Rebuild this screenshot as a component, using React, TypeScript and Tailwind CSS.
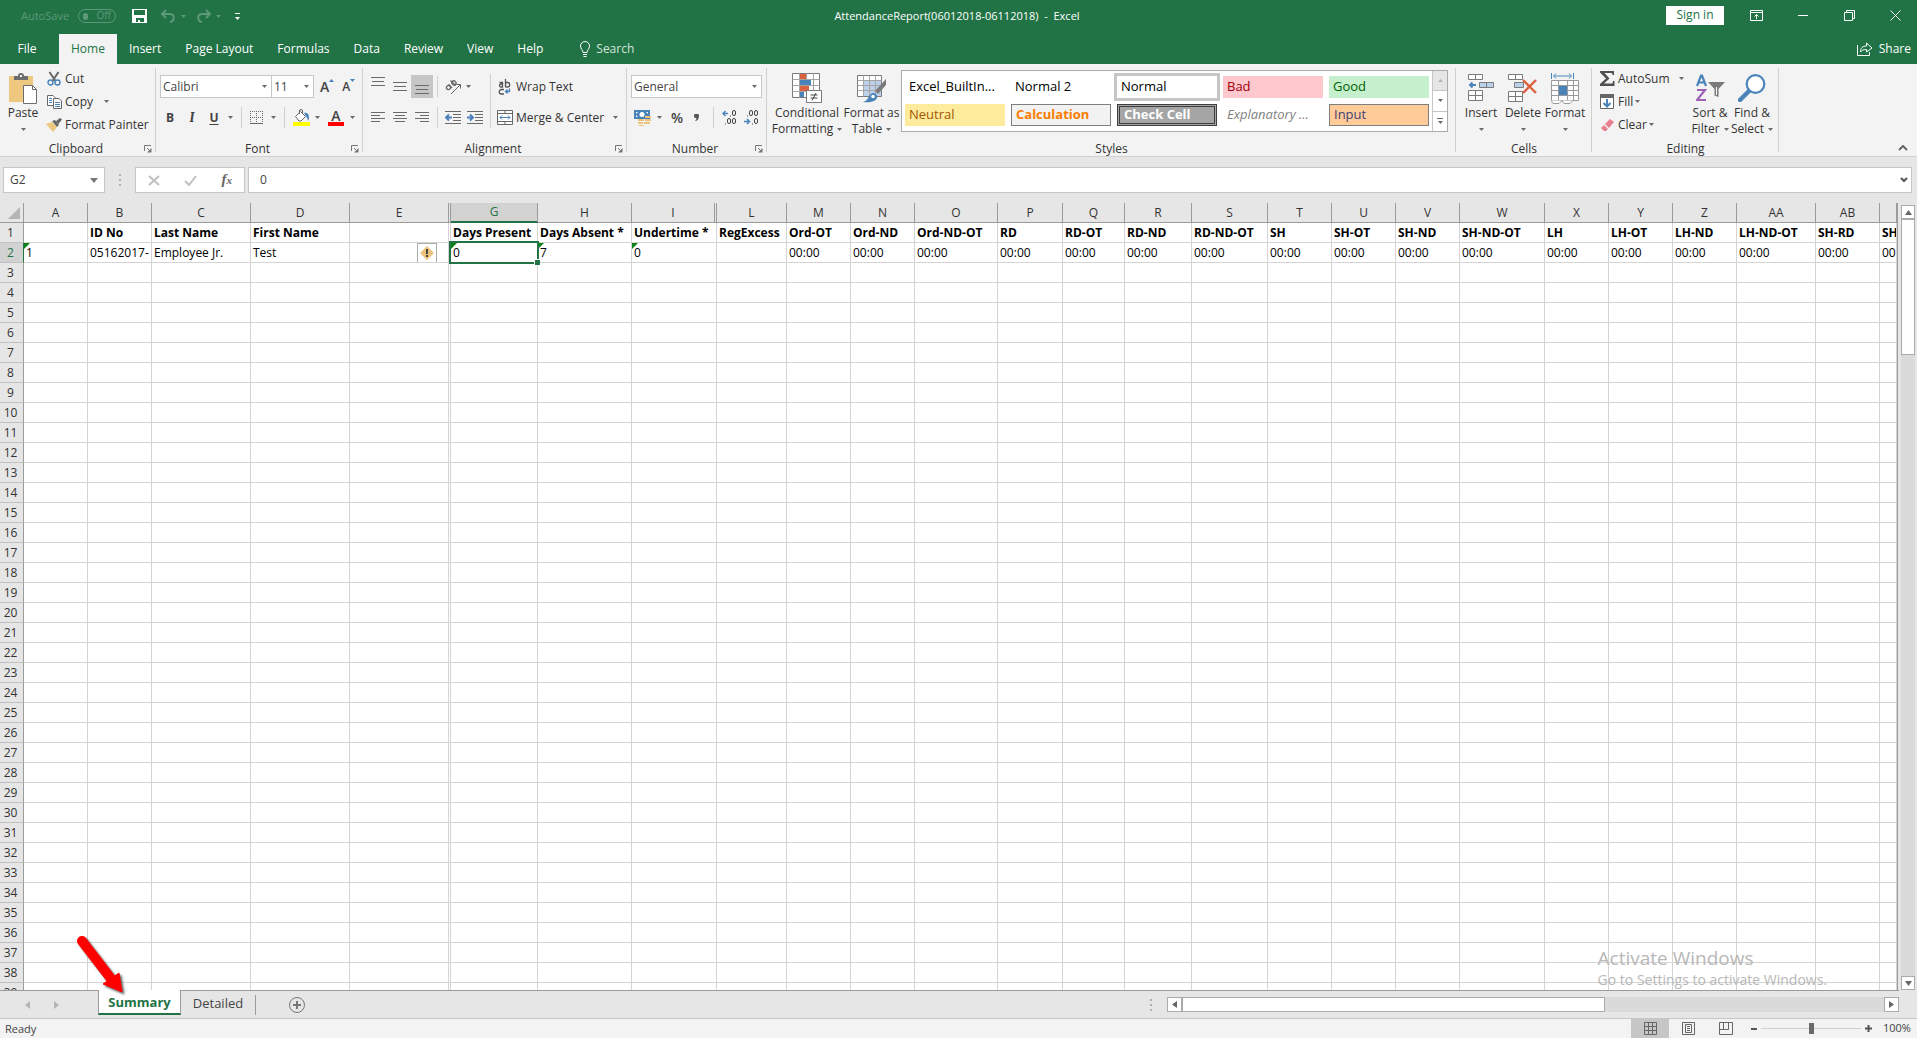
import { useState } from "react";
import clsx from "clsx";

interface Column {
  letter: string;
  width: string;
  title?: string;
  value?: string;
  flagged?: boolean;
}

interface CellStyle {
  label: string;
  className: string;
}

const columns: Column[] = [
  { letter: "A", width: "w-[64px]", value: "1", flagged: true },
  { letter: "B", width: "w-[64px]", title: "ID No", value: "05162017-" },
  { letter: "C", width: "w-[99px]", title: "Last Name", value: "Employee Jr." },
  { letter: "D", width: "w-[99px]", title: "First Name", value: "Test" },
  { letter: "E", width: "w-[99px]" },
  { letter: "", width: "w-[2px]" },
  { letter: "G", width: "w-[87px]", title: "Days Present", value: "0", flagged: true },
  { letter: "H", width: "w-[94px]", title: "Days Absent *", value: "7", flagged: true },
  { letter: "I", width: "w-[83px]", title: "Undertime *", value: "0", flagged: true },
  { letter: "", width: "w-[2px]" },
  { letter: "L", width: "w-[70px]", title: "RegExcess" },
  { letter: "M", width: "w-[64px]", title: "Ord-OT", value: "00:00" },
  { letter: "N", width: "w-[64px]", title: "Ord-ND", value: "00:00" },
  { letter: "O", width: "w-[83px]", title: "Ord-ND-OT", value: "00:00" },
  { letter: "P", width: "w-[65px]", title: "RD", value: "00:00" },
  { letter: "Q", width: "w-[62px]", title: "RD-OT", value: "00:00" },
  { letter: "R", width: "w-[67px]", title: "RD-ND", value: "00:00" },
  { letter: "S", width: "w-[76px]", title: "RD-ND-OT", value: "00:00" },
  { letter: "T", width: "w-[64px]", title: "SH", value: "00:00" },
  { letter: "U", width: "w-[64px]", title: "SH-OT", value: "00:00" },
  { letter: "V", width: "w-[64px]", title: "SH-ND", value: "00:00" },
  { letter: "W", width: "w-[85px]", title: "SH-ND-OT", value: "00:00" },
  { letter: "X", width: "w-[64px]", title: "LH", value: "00:00" },
  { letter: "Y", width: "w-[64px]", title: "LH-OT", value: "00:00" },
  { letter: "Z", width: "w-[64px]", title: "LH-ND", value: "00:00" },
  { letter: "AA", width: "w-[79px]", title: "LH-ND-OT", value: "00:00" },
  { letter: "AB", width: "w-[64px]", title: "SH-RD", value: "00:00" },
  { letter: "", width: "w-auto", title: "SH-RD-OT", value: "00:00" },
];

const rows = Array.from({ length: 39 }, (_, i) => i + 1);

const menuTabs = ["Home", "Insert", "Page Layout", "Formulas", "Data", "Review", "View", "Help"];

const cellStyles: CellStyle[] = [
  { label: "Excel_BuiltIn...", className: "text-black" },
  { label: "Normal 2", className: "text-black" },
  { label: "Normal", className: "bg-white text-black outline-3 outline-[#c6c6c6]" },
  { label: "Bad", className: "bg-[#ffc7ce] text-[#9c0006]" },
  { label: "Good", className: "bg-[#c6efce] text-[#006100]" },
  { label: "Neutral", className: "bg-[#ffeb9c] text-[#9c5700]" },
  { label: "Calculation", className: "border border-[#7f7f7f] bg-[#f2f2f2] font-bold text-[#fa7d00]" },
  { label: "Check Cell", className: "border-3 border-double border-[#3f3f3f] bg-[#a5a5a5] font-bold text-white" },
  { label: "Explanatory ...", className: "text-[#7f7f7f] italic" },
  { label: "Input", className: "border border-[#7f7f7f] bg-[#ffcc99] text-[#3f3f76]" },
];

function Caret({ className = "text-[#6a6a6a]" }: { className?: string }) {
  return (
    <svg width="5" height="3" viewBox="0 0 5 3" className={clsx("shrink-0", className)}>
      <path d="M0 0h5L2.5 3z" fill="currentColor" />
    </svg>
  );
}

function Launcher() {
  return (
    <button aria-label="More options" className="text-[#777]">
      <svg width="8" height="8" viewBox="0 0 8 8" fill="none" stroke="currentColor">
        <path d="M.5 6V.5H7M3 3l3 3" />
        <path d="M7.5 3v4.5H3z" fill="currentColor" stroke="none" />
      </svg>
    </button>
  );
}

function Divider({ className = "h-[21px]" }: { className?: string }) {
  return <span className={clsx("w-px shrink-0 bg-[#d0d0d0]", className)} />;
}

function RibbonGroup({
  name,
  className,
  launcher = false,
  children,
}: {
  name: string;
  className: string;
  launcher?: boolean;
  children: React.ReactNode;
}) {
  return (
    <section aria-label={name} className={clsx("relative flex flex-col", className)}>
      <div className="flex h-[76px] pt-[3px]">{children}</div>
      <div className="flex h-4 items-center pt-px">
        <span className={clsx("flex-1 text-center text-[#333]", launcher && "pl-2")}>{name}</span>
        {launcher && (
          <span className="pr-1">
            <Launcher />
          </span>
        )}
      </div>
      <span className="absolute top-1 right-0 h-[84px] w-px bg-[#d0d0d0]" />
    </section>
  );
}

function SmallButton({ icon, label, caret }: { icon: React.ReactNode; label: string; caret?: string }) {
  return (
    <button className="flex h-[23px] items-center gap-[3px]">
      <span className="flex w-4 justify-center">{icon}</span>
      <span>{label}</span>
      {caret && <Caret className={clsx("text-[#6a6a6a]", caret)} />}
    </button>
  );
}

function BigButton({
  icon,
  lines,
  className,
}: {
  icon: React.ReactNode;
  lines: string[];
  className: string;
}) {
  return (
    <button className={clsx("flex flex-col items-center", className)}>
      <span className="flex h-[38px] items-center justify-center pt-1">{icon}</span>
      <span className="h-4 leading-4 whitespace-nowrap">{lines[0]}</span>
      <span className="flex h-4 items-center gap-1 leading-4 whitespace-nowrap">
        {lines[1]}
        <Caret />
      </span>
    </button>
  );
}

function Lines({ rows: lines }: { rows: [number, number][] }) {
  return (
    <svg width="14" height="14" viewBox="0 0 14 14" stroke="#6a6a6a">
      {lines.map(([from, to], i) => (
        <path key={i} d={`M${from} ${i * (lines.length === 3 ? 4 : 3) + (lines.length === 3 ? 2.5 : 1.5)}H${to}`} />
      ))}
    </svg>
  );
}

function TitleBar() {
  return (
    <header className="relative flex h-[34px] items-start bg-[#217346] text-white">
      <div className="flex h-8 items-center pl-[21px] text-[#5d9878]">
        <span className="w-[57px] text-[11px]">AutoSave</span>
        <button
          aria-label="AutoSave off"
          className="flex h-[14px] w-[38px] items-center gap-2 rounded-full border border-[#5d9878] px-1 text-[10px]"
        >
          <span className="size-[7px] rounded-full bg-[#5d9878]" />
          Off
        </button>
        <button aria-label="Save" className="ml-4 text-white">
          <svg width="15" height="14" viewBox="0 0 15 14">
            <path d="M0 0h15v14H0zM2 1v5h11V1zM4 9v4h2v-2h2v2h4V9z" fill="currentColor" fillRule="evenodd" />
          </svg>
        </button>
        <button aria-label="Undo" className="ml-[13px] flex items-center gap-1">
          <svg width="17" height="14" viewBox="0 0 17 14" fill="none" stroke="currentColor" strokeWidth="2">
            <path d="M6 1 2 5l4 4M2 5h8c5 0 5 7 0 8" />
          </svg>
          <Caret className="text-[#5d9878]" />
        </button>
        <button aria-label="Redo" className="ml-[9px] flex items-center gap-1">
          <svg width="17" height="14" viewBox="0 0 17 14" fill="none" stroke="currentColor" strokeWidth="2">
            <path d="m11 1 4 4-4 4M15 5H7c-5 0-5 7 0 8" />
          </svg>
          <Caret className="text-[#5d9878]" />
        </button>
        <button aria-label="Customize toolbar" className="ml-[14px] flex flex-col gap-[3px] text-white">
          <span className="h-px w-[5px] bg-white" />
          <Caret className="text-white" />
        </button>
      </div>
      <h1 className="flex h-8 flex-1 items-center justify-center pl-2 text-[11px] whitespace-pre">
        AttendanceReport(06012018-06112018)  -  Excel
      </h1>
      <div className="flex h-[30px] items-center pr-4">
        <button className="mr-[26px] h-[19px] w-[58px] bg-white text-[#217346]">Sign in</button>
        <button aria-label="Ribbon display options">
          <svg width="13" height="11" viewBox="0 0 13 11" fill="none" stroke="currentColor">
            <path d="M.5.5h12v10H.5zM.5 2.500h12M6.500 9V4.500M4.500 6.500l2-2 2 2" />
          </svg>
        </button>
        <button aria-label="Minimize" className="ml-[35px]">
          <svg width="10" height="11" viewBox="0 0 10 11" stroke="currentColor">
            <path d="M0 5.500h10" />
          </svg>
        </button>
        <button aria-label="Restore" className="ml-9">
          <svg width="11" height="11" viewBox="0 0 11 11" fill="none" stroke="currentColor">
            <path d="M.5 2.500h8v8h-8zM2.500 2.500v-2h8v8h-2" />
          </svg>
        </button>
        <button aria-label="Close" className="ml-[35px]">
          <svg width="11" height="11" viewBox="0 0 11 11" stroke="currentColor">
            <path d="m.5.5 10 10M10.500.5l-10 10" />
          </svg>
        </button>
      </div>
    </header>
  );
}

function MenuBar() {
  const [active, setActive] = useState("Home");

  return (
    <nav className="flex h-[30px] bg-[#217346] text-white">
      <button className="w-[59px] pr-[5px]">File</button>
      {menuTabs.map((tab) => (
        <button
          key={tab}
          onClick={() => setActive(tab)}
          className={clsx("px-3 whitespace-nowrap", active === tab && "bg-[#f3f3f3] text-[#217346]")}
        >
          {tab}
        </button>
      ))}
      <button className="ml-6 flex items-center gap-[5px] text-[#d3e3da]">
        <svg width="12" height="16" viewBox="0 0 12 16" fill="none" stroke="#fff">
          <path d="M4 11.500C4 9 1.500 8 1.500 5a4.500 4.500 0 0 1 9 0c0 3-2.500 4-2.500 6.500zM4 13.500h4M4.500 15.500h3" />
        </svg>
        Search
      </button>
      <button className="ml-auto flex items-center gap-[6px] pr-[6px]">
        <svg width="16" height="14" viewBox="0 0 16 14" fill="none" stroke="currentColor">
          <path d="M.5 3v10.500h12V10M3.500 10c0-4 2-6 6-6V1l5.500 5-5.500 4V7.500c-3 0-4.500.5-6 2.500z" />
        </svg>
        Share
      </button>
    </nav>
  );
}

function ClipboardGroup() {
  return (
    <RibbonGroup name="Clipboard" className="w-[156px]" launcher>
      <BigButton
        className="ml-1 w-[38px]"
        lines={["Paste", ""]}
        icon={
          <svg width="30" height="31" viewBox="0 0 30 31">
            <path d="M1 3h24v26H1z" fill="#edc87e" />
            <path d="M6 7V3h4a3 3 0 0 1 6 0h4v4z" fill="#6d6d6d" />
            <path d="M12 2h2v2h-2z" fill="#f3f3f3" />
            <path d="M15.500 12.500h9l4 4v14h-13z" fill="#fff" stroke="#6d6d6d" />
            <path d="M24.500 12.500v4h4" fill="none" stroke="#6d6d6d" />
          </svg>
        }
      />
      <div className="ml-1 flex flex-col">
        <SmallButton
          label="Cut"
          icon={
            <svg width="14" height="15" viewBox="0 0 14 15" fill="none">
              <path d="m2.500 1 6 9M11.500 1l-6 9" stroke="#666" strokeWidth="2" />
              <circle cx="3.500" cy="11.500" r="2.500" stroke="#4a83ba" strokeWidth="1.400" />
              <circle cx="10.500" cy="11.500" r="2.500" stroke="#4a83ba" strokeWidth="1.400" />
            </svg>
          }
        />
        <SmallButton
          label="Copy"
          caret="ml-2"
          icon={
            <svg width="15" height="14" viewBox="0 0 15 14" fill="#fff" stroke="#666">
              <path d="M.5.5H6l2 2v8H.5z" />
              <path d="M6.500 3.500H12l2.500 2.500v7.500h-8z" />
              <path d="M2 3.500h3M2 5.500h3M2 7.500h3M8 7.500h5M8 9.500h5M8 11.500h5" stroke="#4a83ba" />
            </svg>
          }
        />
        <SmallButton
          label="Format Painter"
          icon={
            <svg width="16" height="14" viewBox="0 0 16 14">
              <path d="m0 6 6-2 5 5-4 5z" fill="#edc87e" />
              <path d="m6 3 3-1 4 5-2 2zM10 3l4-3 2 1.500L12.500 6z" fill="#666" />
            </svg>
          }
        />
      </div>
    </RibbonGroup>
  );
}

function FontGroup() {
  return (
    <RibbonGroup name="Font" className="w-[207px]" launcher>
      <div className="flex flex-col gap-2 pt-2 pl-1 text-[#444]">
        <div className="flex h-[23px] items-center">
          <button className="flex h-[23px] w-[112px] items-center justify-between border border-[#c6c6c6] bg-white pr-1 pl-[2px]">
            Calibri <Caret />
          </button>
          <button className="-ml-px flex h-[23px] w-[43px] items-center justify-between border border-[#c6c6c6] bg-white pr-1 pl-[2px]">
            11 <Caret />
          </button>
          <button aria-label="Increase font size" className="ml-[6px] flex items-start text-sm leading-4 font-semibold">
            A
            <svg width="5" height="3" viewBox="0 0 5 3">
              <path d="M0 3h5L2.500 0z" fill="#4a83ba" />
            </svg>
          </button>
          <button aria-label="Decrease font size" className="ml-2 flex items-start text-xs leading-4 font-semibold">
            A
            <svg width="5" height="3" viewBox="0 0 5 3">
              <path d="M0 0h5L2.500 3z" fill="#4a83ba" />
            </svg>
          </button>
        </div>
        <div className="flex h-[23px] items-center">
          <button className="w-5 font-bold">B</button>
          <button className="ml-[2px] w-5 font-serif text-sm font-bold italic">I</button>
          <button className="ml-[2px] w-5 font-bold underline underline-offset-2">U</button>
          <Caret className="ml-1 text-[#6a6a6a]" />
          <Divider className="ml-2 h-[21px]" />
          <button aria-label="Borders" className="ml-2 flex items-center gap-2">
            <svg width="13" height="13" viewBox="0 0 13 13" fill="none" stroke="#6a6a6a">
              <path d="M0 .5h13M0 6.500h13M.5 0v12M6.500 0v12M12.500 0v12" strokeDasharray="1 1" />
              <path d="M0 12.500h13" />
            </svg>
            <Caret />
          </button>
          <Divider className="ml-2 h-[21px]" />
          <button aria-label="Fill color" className="ml-2 flex items-center gap-[5px]">
            <svg width="17" height="17" viewBox="0 0 17 17">
              <path d="m2.500 7.500 5-5 5 5-4.500 4.500h-2z" fill="#fff" stroke="#666" />
              <path d="M6.500 5V2a1.500 1.500 0 0 1 3 0v3" fill="none" stroke="#666" />
              <path d="M11 4c4-1 6 2 4.500 8l-2-4z" fill="#4a83ba" />
              <path d="M0 13h17v4H0z" fill="#ff0" />
            </svg>
            <Caret />
          </button>
          <button aria-label="Font color" className="ml-2 flex items-center gap-[6px]">
            <span className="flex h-[17px] w-4 items-center justify-center border-b-4 border-[#f00] text-sm font-semibold">
              A
            </span>
            <Caret />
          </button>
        </div>
      </div>
    </RibbonGroup>
  );
}

function AlignmentGroup() {
  return (
    <RibbonGroup name="Alignment" className="w-[264px]" launcher>
      <div className="flex flex-col gap-2 pt-2 pl-1">
        <div className="flex h-[23px] items-center">
          <button aria-label="Top align" className="flex h-[23px] w-[22px] justify-center">
            <Lines rows={[[0, 14], [1, 13], [0, 14]]} />
          </button>
          <button aria-label="Middle align" className="flex h-[23px] w-[22px] items-center justify-center">
            <Lines rows={[[0, 14], [1, 13], [0, 14]]} />
          </button>
          <button aria-label="Bottom align" className="flex h-[23px] w-[22px] items-end justify-center bg-[#c6c6c6] pb-px">
            <Lines rows={[[0, 14], [1, 13], [0, 14]]} />
          </button>
          <Divider className="ml-1 h-[21px]" />
          <button aria-label="Orientation" className="ml-[7px] flex items-center gap-1">
            <svg width="17" height="16" viewBox="0 0 17 16" stroke="#666" fill="none" className="overflow-visible">
              <g strokeWidth="1.300">
                <ellipse cx="3.500" cy="8.500" rx="2.200" ry="2" transform="rotate(-45 3.500 8.500)" />
                <path d="m3.500 5.500 3.500 3.500M5.500 1.500l5 5" />
                <ellipse cx="9" cy="4" rx="2" ry="2.200" transform="rotate(-45 9 4)" />
              </g>
              <path d="M6 15 15 6M11.500 5.500h4v4" />
            </svg>
            <Caret />
          </button>
        </div>
        <div className="flex h-[23px] items-center">
          <button aria-label="Align left" className="flex w-[22px] justify-center">
            <Lines rows={[[0, 14], [0, 9], [0, 14], [0, 9]]} />
          </button>
          <button aria-label="Center" className="flex w-[22px] justify-center">
            <Lines rows={[[0, 14], [2, 12], [0, 14], [2, 12]]} />
          </button>
          <button aria-label="Align right" className="flex w-[22px] justify-center">
            <Lines rows={[[0, 14], [5, 14], [0, 14], [5, 14]]} />
          </button>
          <Divider className="ml-1 h-[21px]" />
          <button aria-label="Decrease indent" className="ml-[7px]">
            <svg width="16" height="13" viewBox="0 0 16 13" fill="none" stroke="#6a6a6a">
              <path d="M0 .5h16M8 3.500h8M8 6.500h8M8 9.500h8M0 12.500h16" />
              <path d="M7 6.500H1M4 3.500l-3 3 3 3" stroke="#4a83ba" strokeWidth="2" />
            </svg>
          </button>
          <button aria-label="Increase indent" className="ml-[6px]">
            <svg width="16" height="13" viewBox="0 0 16 13" fill="none" stroke="#6a6a6a">
              <path d="M0 .5h16M8 3.500h8M8 6.500h8M8 9.500h8M0 12.500h16" />
              <path d="M0 6.500h6M3 3.500l3 3-3 3" stroke="#4a83ba" strokeWidth="2" />
            </svg>
          </button>
        </div>
      </div>
      <Divider className="mt-[7px] ml-[7px] h-[54px]" />
      <div className="ml-[6px] flex flex-col gap-2 pt-2">
        <SmallButton
          label="Wrap Text"
          icon={
            <svg width="14" height="16" viewBox="0 0 14 16" fill="none" stroke="#555" strokeWidth="1.300">
              <path d="M1.500 3.500h3V8H3a1.500 1.500 0 0 1 0-3h1.500M7.500 0v8M7.500 8h2a2 2 0 0 0 0-4.500h-2M6 10.500H3.500a2 2 0 0 0 0 4.500H6" />
              <path d="M11.500 9.500v3H8M9.500 10.500 7.500 12.500l2 2" stroke="#4a83ba" />
            </svg>
          }
        />
        <SmallButton
          label="Merge & Center"
          caret="ml-[6px]"
          icon={
            <svg width="16" height="15" viewBox="0 0 16 15" fill="#fff" stroke="#666">
              <path d="M.5.5h15v14H.5zM.5 3.500h15M.5 11.500h15M8 .5v3M8 11.500v3" />
              <path d="M3 7.500h10M5 5.500l-2 2 2 2M11 5.500l2 2-2 2" fill="none" stroke="#4a83ba" />
            </svg>
          }
        />
      </div>
    </RibbonGroup>
  );
}

function NumberGroup() {
  return (
    <RibbonGroup name="Number" className="w-[140px]" launcher>
      <div className="flex flex-col gap-2 pt-2 pl-1 text-[#444]">
        <button className="flex h-[23px] w-[131px] items-center justify-between border border-[#c6c6c6] bg-white pr-1 pl-[2px]">
          General <Caret />
        </button>
        <div className="flex h-[23px] items-center pl-[3px]">
          <button aria-label="Accounting format" className="flex items-center gap-[6px]">
            <svg width="17" height="16" viewBox="0 0 17 16">
              <path d="M0 0h16v9H0z" fill="#4a83ba" />
              <path d="M2 2h2L2 4zM14 2v2l-2-2zM2 7V5l2 2z" fill="#fff" />
              <circle cx="8" cy="4.500" r="2.500" fill="#fff" />
              <path d="M11 6h6v2h-6zM11 9h6v2h-6zM10 12h6v2h-6zM4 9h6v2H4zM4 12h5v2H4zM5 15h5v1H5z" fill="#edc27a" />
            </svg>
            <Caret />
          </button>
          <button className="ml-2 w-[14px] text-sm font-semibold">%</button>
          <button aria-label="Comma style" className="ml-[10px]">
            <svg width="5" height="7" viewBox="0 0 5 7">
              <path d="M0 2a2.300 2.300 0 0 1 5 0c0 3-2 5-4 5 1-1 1.500-2 1.500-3A2 2 0 0 1 0 2" fill="#555" />
            </svg>
          </button>
          <Divider className="ml-[14px] h-[21px]" />
          <button aria-label="Increase decimal" className="ml-2">
            <svg width="15" height="15" viewBox="0 0 15 15" fill="none" stroke="#444">
              <path d="M8 6h1M3 14h1" />
              <rect x="10.500" y=".5" width="3" height="5" rx="1.500" />
              <rect x="5.500" y="8.500" width="3" height="5" rx="1.500" />
              <rect x="10.500" y="8.500" width="3" height="5" rx="1.500" />
              <path d="M6 3.500H1M3.500 1 1 3.500 3.500 6" stroke="#4a83ba" strokeWidth="1.500" />
            </svg>
          </button>
          <button aria-label="Decrease decimal" className="ml-[7px]">
            <svg width="15" height="15" viewBox="0 0 15 15" fill="none" stroke="#444">
              <path d="M3 6h1M8 14h1" />
              <rect x="5.500" y=".5" width="3" height="5" rx="1.500" />
              <rect x="10.500" y=".5" width="3" height="5" rx="1.500" />
              <rect x="10.500" y="8.500" width="3" height="5" rx="1.500" />
              <path d="M0 11.500h5M3 9l2.500 2.500L3 14" stroke="#4a83ba" strokeWidth="1.500" />
            </svg>
          </button>
        </div>
      </div>
    </RibbonGroup>
  );
}

function StylesGroup() {
  return (
    <RibbonGroup name="Styles" className="w-[689px]">
      <BigButton
        className="w-20"
        lines={["Conditional", "Formatting"]}
        icon={
          <svg width="30" height="30" viewBox="0 0 30 30">
            <path d="M.5.5h27v24H.5z" fill="#fff" stroke="#7a7a7a" />
            <path d="M.5 6.500h27M.5 12.500h27M.5 18.500h27M7.500.5v24M14.500.5v24M21.500.5v24" stroke="#a5a5a5" />
            <path d="M8 1h6v5H8zM8 13h9v5H8z" fill="#dc6141" />
            <path d="M8 7h11v5H8zM8 19h4v5H8z" fill="#4a83ba" />
            <path d="M14.500 17.500h15v12h-15z" fill="#fff" stroke="#7a7a7a" />
            <path d="M18.500 22h7M18.500 25h7M24 20l-4 7.500" stroke="#444" />
          </svg>
        }
      />
      <BigButton
        className="w-[49px]"
        lines={["Format as", "Table"]}
        icon={
          <svg width="30" height="30" viewBox="0 0 30 30">
            <path d="M.5 2.500h24v21H.5z" fill="#fff" stroke="#7a7a7a" />
            <path d="M7 8h17v15H7z" fill="#bdd0e9" />
            <path d="M.5 7.500h24M.5 12.500h24M.5 17.500h24M6.500 2.500v21M12.500 2.500v21M18.500 2.500v21" stroke="#a5a5a5" />
            <path d="M29 6v6l-8 9-3-3z" fill="#7a7a7a" />
            <path d="M6 29c4-1 5-4 7-7 3-4 8-1 7 3-2 4-8 5-14 4z" fill="#4a83ba" />
            <circle cx="16" cy="23.500" r="1.800" fill="#fff" />
          </svg>
        }
      />
      <div className="mt-[3px] ml-[5px] flex h-[62px] flex-1 border border-[#ababab] bg-white">
        <div className="grid flex-1 grid-cols-5 gap-x-[6px] gap-y-[6px] px-[3px] py-[5px] text-[13px]">
          {cellStyles.map((style) => (
            <button
              key={style.label}
              className={clsx("flex h-[22px] items-center px-1 pb-[2px] leading-4 whitespace-nowrap", style.className)}
            >
              {style.label}
            </button>
          ))}
        </div>
        <div className="flex w-[15px] flex-col divide-y divide-[#c6c6c6] border-l border-[#c6c6c6]">
          <button aria-label="Scroll styles up" className="flex flex-1 items-center justify-center bg-[#e6e6e6]">
            <Caret className="rotate-180 text-[#b5b5b5]" />
          </button>
          <button aria-label="Scroll styles down" className="flex flex-1 items-center justify-center">
            <Caret />
          </button>
          <button aria-label="More styles" className="flex flex-1 flex-col items-center justify-center gap-[2px]">
            <span className="h-px w-[6px] bg-[#6a6a6a]" />
            <Caret />
          </button>
        </div>
      </div>
      <span className="w-2" />
    </RibbonGroup>
  );
}

function CellsGroup() {
  return (
    <RibbonGroup name="Cells" className="w-[136px]">
      <BigButton
        className="ml-1 w-[42px]"
        lines={["Insert", ""]}
        icon={
          <svg width="27" height="28" viewBox="0 0 27 28" fill="#fff" stroke="#7a7a7a">
            <path d="M.5.5h14v5H.5zM7.500.5v5M.5 16.500h14v10H.5zM7.500 16.500v10M.5 21.500h14" />
            <path d="M11.500 8.500h14v5h-14zM18.500 8.500v5" fill="#bdd0e9" />
            <path d="M8 11H2M4.500 8.500 2 11l2.500 2.500" fill="none" stroke="#4a83ba" strokeWidth="2" />
          </svg>
        }
      />
      <BigButton
        className="w-[42px]"
        lines={["Delete", ""]}
        icon={
          <svg width="30" height="28" viewBox="0 0 30 28" fill="#fff" stroke="#7a7a7a">
            <path d="M.5.5h14v5H.5zM7.500.5v5M.5 17.500h14v10H.5zM7.500 17.500v10M.5 22.500h14" />
            <path d="M6.500 8.500h9v5h-9z" fill="#bdd0e9" />
            <path d="m15 6 13 13M28 6 15 19" fill="none" stroke="#dc6141" strokeWidth="2.400" />
          </svg>
        }
      />
      <BigButton
        className="w-[42px]"
        lines={["Format", ""]}
        icon={
          <svg width="29" height="31" viewBox="0 0 29 31" fill="none" stroke="#9a9a9a">
            <path d="M.5 7.500h27v20H.5z" fill="#fff" />
            <path d="M.5 12.500h27M.5 22.500h27M7.500 7.500v20M16.500 7.500v20M22.500 7.500v20M.5 17.500h27" />
            <path d="M0 27.500 2 30.500h6l3-3 2 3h6l3-3" fill="#fff" />
            <path d="M8 13h8v9H8z" fill="#4a83ba" stroke="none" />
            <path d="M.5 0v6M22.500 0v6M3 3h17M5 .5 2.500 3 5 5.500M18 .5 20.500 3 18 5.500" stroke="#4a83ba" />
          </svg>
        }
      />
    </RibbonGroup>
  );
}

function EditingGroup() {
  return (
    <RibbonGroup name="Editing" className="w-[187px]">
      <div className="ml-[7px] flex w-[90px] flex-col">
        <SmallButton
          label="AutoSum"
          caret="ml-[6px]"
          icon={
            <svg width="15" height="15" viewBox="0 0 15 15">
              <path d="M0 0h14v4h-1.500L12 2H4.500l5 5.500-5.500 5h8.500l.5-2.500h1.500v5H0v-2l6-5.500L0 1.500z" fill="#505050" />
            </svg>
          }
        />
        <SmallButton
          label="Fill"
          caret="-ml-px"
          icon={
            <svg width="14" height="15" viewBox="0 0 14 15">
              <path d="M.5.5h13v14H.5z" fill="#fff" stroke="#666" />
              <path d="M0 0h14v4H0z" fill="#666" />
              <path d="M7 5v7.500M3.500 9 7 12.500 10.500 9" fill="none" stroke="#4a83ba" strokeWidth="2" />
            </svg>
          }
        />
        <SmallButton
          label="Clear"
          caret="-ml-px"
          icon={
            <svg width="13" height="12" viewBox="0 0 13 12">
              <path d="m4 5 5-5 4 3-5 6z" fill="#e8808f" />
              <path d="m3 6 4 4-2 2H3L0 9z" fill="#e8808f" />
            </svg>
          }
        />
      </div>
      <BigButton
        className="w-[42px]"
        lines={["Sort &", "Filter"]}
        icon={
          <svg width="29" height="28" viewBox="0 0 29 28" fill="none">
            <path d="M1 12 5 1.500h1L10 12M2.500 8.500h6" stroke="#4a83ba" strokeWidth="2.200" />
            <path d="M1 16h8l-8 10h9" stroke="#9b62b8" strokeWidth="2.200" />
            <path d="M12 8h17l-6.500 7v8l-4-1.500V15z" fill="#7a7a7a" />
            <path d="M20.500 13v8" stroke="#fff" />
          </svg>
        }
      />
      <BigButton
        className="w-[42px]"
        lines={["Find &", "Select"]}
        icon={
          <svg width="28" height="28" viewBox="0 0 28 28">
            <path d="m2 26 9-9" stroke="#4a83ba" strokeWidth="4.500" strokeLinecap="round" />
            <circle cx="17.500" cy="10" r="8.800" fill="#fff" stroke="#4a83ba" strokeWidth="2.200" />
          </svg>
        }
      />
    </RibbonGroup>
  );
}

function FormulaBar() {
  return (
    <div className="flex h-[46px] items-start bg-[#e6e6e6] pt-[10px] pr-[5px] pl-[3px] text-[#444]">
      <button className="flex h-[26px] w-[102px] items-center justify-between border border-[#c6c6c6] bg-white px-[6px]">
        G2
        <svg width="8" height="5" viewBox="0 0 8 5">
          <path d="M0 0h8L4 5z" fill="#777" />
        </svg>
      </button>
      <span className="flex h-[26px] w-[30px] flex-col items-center justify-center gap-[3px]">
        <i className="size-[2px] bg-[#b0b0b0]" />
        <i className="size-[2px] bg-[#b0b0b0]" />
        <i className="size-[2px] bg-[#b0b0b0]" />
      </span>
      <div className="flex h-[26px] w-[110px] items-center justify-between border border-[#c6c6c6] bg-white px-3">
        <button aria-label="Cancel">
          <svg width="12" height="11" viewBox="0 0 12 11" stroke="#c0c0c0" strokeWidth="2">
            <path d="m1 1 10 9M11 1 1 10" />
          </svg>
        </button>
        <button aria-label="Enter">
          <svg width="13" height="11" viewBox="0 0 13 11" fill="none" stroke="#c0c0c0" strokeWidth="2">
            <path d="m1 6 4 4 7-9" />
          </svg>
        </button>
        <button aria-label="Insert function" className="font-['Liberation_Serif',serif] text-[15px] font-bold italic text-[#666]">
          f<span className="text-[11px]">x</span>
        </button>
      </div>
      <div className="ml-[3px] flex h-[26px] flex-1 items-center border border-[#c6c6c6] bg-white pr-[3px] pl-[11px]">
        <input aria-label="Formula" defaultValue="0" className="min-w-0 flex-1 outline-none" />
        <button aria-label="Expand formula bar">
          <svg width="8" height="6" viewBox="0 0 8 6" fill="none" stroke="#555" strokeWidth="2">
            <path d="m1 1 3 3 3-3" />
          </svg>
        </button>
      </div>
    </div>
  );
}

function Sheet() {
  return (
    <table className="w-full min-w-[1880px] table-fixed border-separate border-spacing-0 bg-white text-xs text-black">
      <colgroup>
        <col className="w-[24px]" />
        {columns.map((col, i) => (
          <col key={i} className={col.width} />
        ))}
      </colgroup>
      <thead>
        <tr className="h-5 bg-[#e6e6e6] text-[#333]">
          <th scope="col" className="border-r border-b border-[#9b9b9b] p-0">
            <svg width="12" height="12" viewBox="0 0 12 12" className="ml-auto mr-[3px]" aria-label="Select all">
              <path d="M12 0v12H0z" fill="#b4b4b4" />
            </svg>
          </th>
          {columns.map((col, i) => (
            <th
              key={i}
              scope="col"
              className={clsx(
                "overflow-hidden border-r border-b p-0 text-center font-normal",
                col.letter === "G"
                  ? "border-r-[#9b9b9b] border-b-2 border-b-[#217346] bg-[#d2d2d2] text-[#217346]"
                  : "border-[#9b9b9b]"
              )}
            >
              {col.letter}
            </th>
          ))}
        </tr>
      </thead>
      <tbody>
        {rows.map((row) => (
          <tr key={row} className="h-5">
            <th
              scope="row"
              className={clsx(
                "border-r border-b border-b-[#c0c0c0] p-0 pt-px pr-[2px] text-center leading-4 font-normal",
                row === 2
                  ? "border-r-[#217346] bg-[#d2d2d2] text-[#217346]"
                  : "border-r-[#9b9b9b] bg-[#e6e6e6] text-[#333]"
              )}
            >
              {row}
            </th>
            {columns.map((col, i) => {
              const text = row === 1 ? col.title : row === 2 ? col.value : "";
              const selected = row === 2 && col.letter === "G";
              return (
                <td
                  key={i}
                  className={clsx(
                    "relative border-b border-[#d4d4d4] py-0 leading-4 whitespace-nowrap",
                    col.letter !== "I" && "border-r",
                    col.width === "w-[2px]" ? "px-0" : "pr-0 pl-[2px]",
                    row === 1 && "font-bold",
                    !selected && "overflow-hidden"
                  )}
                >
                  {text}
                  {row === 2 && col.flagged && (
                    <span className="absolute top-0 left-0 border-t-6 border-r-6 border-t-[#0a8017] border-r-transparent" />
                  )}
                  {row === 2 && col.letter === "E" && (
                    <button
                      aria-label="Number stored as text"
                      className="absolute top-0 right-[11px] flex h-5 w-5 items-center justify-center border border-[#ababab] bg-white"
                    >
                      <svg width="14" height="16" viewBox="0 0 14 16">
                        <path d="m7 1 7 7-7 7-7-7z" fill="#edc27a" />
                        <path d="M6 4h2v5H6zM6 10h2v2H6z" fill="#444" />
                      </svg>
                    </button>
                  )}
                  {selected && (
                    <span className="absolute -top-[2px] -right-[2px] -bottom-[2px] -left-[2px] z-10 border-2 border-[#217346]">
                      <span className="absolute -right-[3px] -bottom-[3px] size-[6px] border-t border-l border-white bg-[#217346]" />
                    </span>
                  )}
                </td>
              );
            })}
          </tr>
        ))}
      </tbody>
    </table>
  );
}

function VerticalScroll() {
  return (
    <div className="flex w-5 shrink-0 flex-col border-l border-[#9b9b9b] bg-[#e6e6e6] pt-[2px] pr-[2px] pl-[3px]">
      <button aria-label="Scroll up" className="flex h-[14px] items-center justify-center border border-[#ababab] bg-white">
        <svg width="7" height="5" viewBox="0 0 7 5">
          <path d="M0 5h7L3.500 0z" fill="#666" />
        </svg>
      </button>
      <div className="flex-1 bg-[#dadada]">
        <div className="h-[136px] border border-[#ababab] bg-white" />
      </div>
      <button aria-label="Scroll down" className="flex h-[14px] items-center justify-center border border-[#ababab] bg-white">
        <svg width="7" height="5" viewBox="0 0 7 5">
          <path d="M0 0h7L3.500 5z" fill="#666" />
        </svg>
      </button>
    </div>
  );
}

function SheetTabs() {
  return (
    <div className="relative flex h-7 bg-[#e6e6e6] text-[#444]">
      <div className="flex flex-1 items-center border-t border-[#9b9b9b] pl-[25px]">
        <button aria-label="Previous sheet">
          <svg width="5" height="8" viewBox="0 0 5 8">
            <path d="M5 0v8L0 4z" fill="#b5b5b5" />
          </svg>
        </button>
        <button aria-label="Next sheet" className="ml-6">
          <svg width="5" height="8" viewBox="0 0 5 8">
            <path d="M0 0v8l5-4z" fill="#b5b5b5" />
          </svg>
        </button>
        <button className="-mt-px ml-[39px] h-[25px] w-[83px] self-start border-x border-b-2 border-x-[#9b9b9b] border-b-[#217346] bg-white pt-px text-[13px] leading-4 font-bold text-[#217346]">
          Summary
        </button>
        <button className="h-5 w-[75px] border-r border-[#9b9b9b] pb-[3px] text-[13px] leading-4">Detailed</button>
        <button aria-label="New sheet" className="ml-[33px]">
          <svg width="16" height="16" viewBox="0 0 16 16" fill="none" stroke="#777">
            <circle cx="8" cy="8" r="7.500" />
            <path d="M8 4v8M4 8h8" strokeWidth="2" />
          </svg>
        </button>
      </div>
      <span className="flex w-8 flex-col items-center justify-center gap-[3px] border-t border-[#9b9b9b]">
        <i className="size-[2px] bg-[#b0b0b0]" />
        <i className="size-[2px] bg-[#b0b0b0]" />
        <i className="size-[2px] bg-[#b0b0b0]" />
      </span>
      <div className="flex w-[732px] items-center border-t border-[#9b9b9b]">
        <button aria-label="Scroll left" className="flex h-[15px] w-[15px] items-center justify-center border border-[#ababab] bg-white">
          <svg width="5" height="7" viewBox="0 0 5 7">
            <path d="M5 0v7L0 3.500z" fill="#666" />
          </svg>
        </button>
        <div className="h-[15px] flex-1 bg-[#dadada]">
          <div className="h-[15px] w-[423px] border border-[#ababab] bg-white" />
        </div>
        <button aria-label="Scroll right" className="flex h-[15px] w-[15px] items-center justify-center border border-[#ababab] bg-white">
          <svg width="5" height="7" viewBox="0 0 5 7">
            <path d="M0 0v7l5-3.500z" fill="#666" />
          </svg>
        </button>
      </div>
      <span className="w-[18px]" />
      {/* pointer to the active sheet */}
      <svg width="60" height="66" viewBox="0 0 60 66" className="pointer-events-none absolute -top-[56px] left-[72px] drop-shadow-[2px_2px_1px_rgba(0,0,0,0.6)]">
        <path d="M10 7 40 46" stroke="#f00" strokeWidth="10" strokeLinecap="round" />
        <path d="m31 50 16-11 3 19z" fill="#f00" stroke="#f00" strokeLinejoin="round" />
      </svg>
    </div>
  );
}

function StatusBar() {
  return (
    <footer className="flex h-5 items-center border-t border-[#c6c6c6] bg-[#f3f3f3] text-[11px] text-[#444]">
      <span className="flex-1 pt-px pl-[5px] leading-4">Ready</span>
      <button aria-label="Normal view" className="flex h-[19px] w-[38px] items-center justify-center bg-[#c6c6c6]">
        <svg width="13" height="13" viewBox="0 0 13 13" fill="none" stroke="#666">
          <path d="M.5.5h12v12H.5zM4.500.5v12M8.500.5v12M.5 4.500h12M.5 8.500h12" />
        </svg>
      </button>
      <button aria-label="Page layout view" className="flex h-[19px] w-[38px] items-center justify-center">
        <svg width="13" height="13" viewBox="0 0 13 13" fill="none" stroke="#666">
          <path d="M.5.5h12v12H.5zM3.500 2.500h6v8h-6zM5 4.500h3M5 6.500h3M5 8.500h3" />
        </svg>
      </button>
      <button aria-label="Page break preview" className="flex h-[19px] w-[38px] items-center justify-center">
        <svg width="14" height="13" viewBox="0 0 14 13" fill="none" stroke="#666">
          <path d="M.5.5h13v12H.5zM4.500.5v7h5v-7M.5 7.500h4" />
        </svg>
      </button>
      <button aria-label="Zoom out" className="mr-[3px] ml-1 flex w-[9px] justify-center">
        <span className="h-[2px] w-[6px] bg-[#555]" />
      </button>
      <input
        type="range"
        aria-label="Zoom"
        defaultValue={50}
        className="h-[11px] w-[100px] appearance-none bg-linear-to-b from-transparent from-45% via-[#ababab] via-45% to-transparent to-55% [&::-webkit-slider-thumb]:h-[11px] [&::-webkit-slider-thumb]:w-[5px] [&::-webkit-slider-thumb]:appearance-none [&::-webkit-slider-thumb]:bg-[#6a6a6a]"
      />
      <button aria-label="Zoom in" className="ml-[3px] flex w-[9px] justify-center">
        <svg width="7" height="7" viewBox="0 0 7 7" stroke="#555" strokeWidth="2">
          <path d="M0 3.500h7M3.500 0v7" />
        </svg>
      </button>
      <span className="w-11 pl-[10px]">100%</span>
    </footer>
  );
}

export default function App() {
  return (
    <div className="flex h-screen flex-col overflow-hidden bg-[#e6e6e6] font-['Open_Sans','Noto_Sans',sans-serif] text-xs text-[#333]">
      <TitleBar />
      <MenuBar />
      <div className="flex h-[93px] shrink-0 border-b border-[#d0d0d0] bg-[#f3f3f3]">
        <ClipboardGroup />
        <FontGroup />
        <AlignmentGroup />
        <NumberGroup />
        <StylesGroup />
        <CellsGroup />
        <EditingGroup />
        <button aria-label="Collapse ribbon" className="mt-auto mr-[9px] mb-[5px] ml-auto">
          <svg width="10" height="6" viewBox="0 0 10 6" fill="none" stroke="#666" strokeWidth="2">
            <path d="m1 5 4-4 4 4" />
          </svg>
        </button>
      </div>
      <FormulaBar />
      <main className="relative flex min-h-0 flex-1">
        <div className="min-w-0 flex-1 overflow-hidden">
          <Sheet />
        </div>
        <VerticalScroll />
        <div className="pointer-events-none absolute right-[90px] bottom-0 text-[#b8b8b8]">
          <p className="text-[19px] leading-6">Activate Windows</p>
          <p className="text-sm leading-5">Go to Settings to activate Windows.</p>
        </div>
      </main>
      <SheetTabs />
      <StatusBar />
    </div>
  );
}
